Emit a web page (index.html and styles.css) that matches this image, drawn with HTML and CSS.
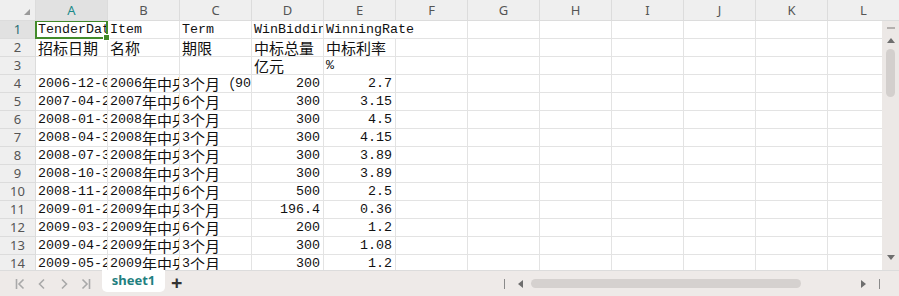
FILE: index.html
```html
<!DOCTYPE html>
<html lang="zh-CN">
<head>
    <meta charset="UTF-8">
    <title>sheet1</title>
    <link rel="stylesheet" href="styles.css">
</head>
<body>
<div class="sheet">
    <!-- column headers -->
    <div class="col-head">
        <div class="corner"><span class="corner-mark"></span></div>
        <div class="ch active">A</div>
        <div class="ch">B</div>
        <div class="ch">C</div>
        <div class="ch">D</div>
        <div class="ch">E</div>
        <div class="ch">F</div>
        <div class="ch">G</div>
        <div class="ch">H</div>
        <div class="ch">I</div>
        <div class="ch">J</div>
        <div class="ch">K</div>
        <div class="ch">L</div>
    </div>

    <div class="body">
        <div class="grid">
            <div class="rh active">1</div>
            <div class="c sel"><span class="clip">TenderDate</span><span class="handle"></span></div>
            <div class="c">Item</div>
            <div class="c">Term</div>
            <div class="c">WinBiddingAmount</div>
            <div class="c wide">WinningRate</div>
            <div class="c"></div><div class="c"></div><div class="c"></div><div class="c"></div><div class="c"></div><div class="c"></div>

            <div class="rh">2</div>
            <div class="c"><span class="zh">招标日期</span></div>
            <div class="c"><span class="zh">名称</span></div>
            <div class="c"><span class="zh">期限</span></div>
            <div class="c"><span class="zh">中标总量</span></div>
            <div class="c"><span class="zh">中标利率</span></div>
            <div class="c"></div><div class="c"></div><div class="c"></div><div class="c"></div><div class="c"></div><div class="c"></div><div class="c"></div>

            <div class="rh">3</div>
            <div class="c"></div>
            <div class="c"></div>
            <div class="c"></div>
            <div class="c"><span class="zh">亿元</span></div>
            <div class="c">%</div>
            <div class="c"></div><div class="c"></div><div class="c"></div><div class="c"></div><div class="c"></div><div class="c"></div><div class="c"></div>

            <div class="rh">4</div>
            <div class="c">2006-12-07</div>
            <div class="c">2006<span class="zh">年中央国库现金管理</span></div>
            <div class="c">3<span class="zh">个月（</span>90<span class="zh">天）</span></div>
            <div class="c num">200</div>
            <div class="c num">2.7</div>
            <div class="c"></div><div class="c"></div><div class="c"></div><div class="c"></div><div class="c"></div><div class="c"></div><div class="c"></div>

            <div class="rh">5</div>
            <div class="c">2007-04-25</div>
            <div class="c">2007<span class="zh">年中央国库现金管理</span></div>
            <div class="c">6<span class="zh">个月</span></div>
            <div class="c num">300</div>
            <div class="c num">3.15</div>
            <div class="c"></div><div class="c"></div><div class="c"></div><div class="c"></div><div class="c"></div><div class="c"></div><div class="c"></div>

            <div class="rh">6</div>
            <div class="c">2008-01-30</div>
            <div class="c">2008<span class="zh">年中央国库现金管理</span></div>
            <div class="c">3<span class="zh">个月</span></div>
            <div class="c num">300</div>
            <div class="c num">4.5</div>
            <div class="c"></div><div class="c"></div><div class="c"></div><div class="c"></div><div class="c"></div><div class="c"></div><div class="c"></div>

            <div class="rh">7</div>
            <div class="c">2008-04-30</div>
            <div class="c">2008<span class="zh">年中央国库现金管理</span></div>
            <div class="c">3<span class="zh">个月</span></div>
            <div class="c num">300</div>
            <div class="c num">4.15</div>
            <div class="c"></div><div class="c"></div><div class="c"></div><div class="c"></div><div class="c"></div><div class="c"></div><div class="c"></div>

            <div class="rh">8</div>
            <div class="c">2008-07-30</div>
            <div class="c">2008<span class="zh">年中央国库现金管理</span></div>
            <div class="c">3<span class="zh">个月</span></div>
            <div class="c num">300</div>
            <div class="c num">3.89</div>
            <div class="c"></div><div class="c"></div><div class="c"></div><div class="c"></div><div class="c"></div><div class="c"></div><div class="c"></div>

            <div class="rh">9</div>
            <div class="c">2008-10-30</div>
            <div class="c">2008<span class="zh">年中央国库现金管理</span></div>
            <div class="c">3<span class="zh">个月</span></div>
            <div class="c num">300</div>
            <div class="c num">3.89</div>
            <div class="c"></div><div class="c"></div><div class="c"></div><div class="c"></div><div class="c"></div><div class="c"></div><div class="c"></div>

            <div class="rh">10</div>
            <div class="c">2008-11-27</div>
            <div class="c">2008<span class="zh">年中央国库现金管理</span></div>
            <div class="c">6<span class="zh">个月</span></div>
            <div class="c num">500</div>
            <div class="c num">2.5</div>
            <div class="c"></div><div class="c"></div><div class="c"></div><div class="c"></div><div class="c"></div><div class="c"></div><div class="c"></div>

            <div class="rh">11</div>
            <div class="c">2009-01-22</div>
            <div class="c">2009<span class="zh">年中央国库现金管理</span></div>
            <div class="c">3<span class="zh">个月</span></div>
            <div class="c num">196.4</div>
            <div class="c num">0.36</div>
            <div class="c"></div><div class="c"></div><div class="c"></div><div class="c"></div><div class="c"></div><div class="c"></div><div class="c"></div>

            <div class="rh">12</div>
            <div class="c">2009-03-26</div>
            <div class="c">2009<span class="zh">年中央国库现金管理</span></div>
            <div class="c">6<span class="zh">个月</span></div>
            <div class="c num">200</div>
            <div class="c num">1.2</div>
            <div class="c"></div><div class="c"></div><div class="c"></div><div class="c"></div><div class="c"></div><div class="c"></div><div class="c"></div>

            <div class="rh">13</div>
            <div class="c">2009-04-23</div>
            <div class="c">2009<span class="zh">年中央国库现金管理</span></div>
            <div class="c">3<span class="zh">个月</span></div>
            <div class="c num">300</div>
            <div class="c num">1.08</div>
            <div class="c"></div><div class="c"></div><div class="c"></div><div class="c"></div><div class="c"></div><div class="c"></div><div class="c"></div>

            <div class="rh">14</div>
            <div class="c">2009-05-21</div>
            <div class="c">2009<span class="zh">年中央国库现金管理</span></div>
            <div class="c">3<span class="zh">个月</span></div>
            <div class="c num">300</div>
            <div class="c num">1.2</div>
            <div class="c"></div><div class="c"></div><div class="c"></div><div class="c"></div><div class="c"></div><div class="c"></div><div class="c"></div>
        </div>

        <!-- vertical scrollbar -->
        <div class="vscroll">
            <span class="vs-dash"></span>
            <span class="tri up"></span>
            <span class="vs-thumb"></span>
            <span class="vs-space"></span>
            <span class="tri down"></span>
        </div>
    </div>

    <!-- sheet tabs + horizontal scrollbar -->
    <div class="tabbar">
        <div class="nav">
            <svg width="10" height="12" viewBox="0 0 10 12"><path d="M1.5 1v10M8.5 1.5L4 6l4.5 4.5" fill="none" stroke="#a9a9a9" stroke-width="1.6"/></svg>
            <svg width="10" height="12" viewBox="0 0 10 12"><path d="M7 1.5L2.5 6 7 10.5" fill="none" stroke="#a9a9a9" stroke-width="1.6"/></svg>
            <svg width="10" height="12" viewBox="0 0 10 12"><path d="M3 1.5L7.5 6 3 10.5" fill="none" stroke="#a9a9a9" stroke-width="1.6"/></svg>
            <svg width="10" height="12" viewBox="0 0 10 12"><path d="M1.5 1.5L6 6l-4.5 4.5M8.5 1v10" fill="none" stroke="#a9a9a9" stroke-width="1.6"/></svg>
        </div>
        <div class="tab">sheet1</div>
        <div class="add">+</div>
        <div class="hscroll">
            <span class="bar"></span>
            <span class="tri left"></span>
            <span class="hs-thumb"></span>
            <span class="hs-space"></span>
            <span class="tri right"></span>
            <span class="bar"></span>
        </div>
    </div>
</div>
</body>
</html>
```

FILE: styles.css
```css
body {
    margin: 0;
    background: #ffffff;
    font-family: "Noto Sans", Arial, sans-serif;
}
.sheet {
    width: 899px;
    height: 296px;
    overflow: hidden;
    display: flex;
    flex-direction: column;
}

/* column headers */
.col-head {
    display: grid;
    grid-template-columns: 36px repeat(12, 72px);
    height: 21px;
    background: #efefef;
    border-bottom: 1px solid #dcdcdc;
    box-sizing: border-box;
    flex: none;
}
.corner {
    border-right: 1px solid #dcdcdc;
    position: relative;
}
.corner-mark {
    position: absolute;
    right: 5px;
    bottom: 5px;
    width: 0;
    height: 0;
    border-left: 6px solid transparent;
    border-bottom: 6px solid #9a9a9a;
}
.ch {
    border-right: 1px solid #dcdcdc;
    text-align: center;
    font-size: 13px;
    line-height: 20px;
    color: #555;
}
.ch.active {
    background: #e1e1e1;
    color: #1b8a8a;
}

/* cell area */
.body {
    display: flex;
    flex: none;
    height: 249px;
}
.grid {
    width: 882px;
    overflow: hidden;
    display: grid;
    grid-template-columns: 36px repeat(12, 72px);
    grid-auto-rows: 18px;
    align-content: start;
}
.rh {
    background: #efefef;
    border-right: 1px solid #dcdcdc;
    border-bottom: 1px solid #dcdcdc;
    text-align: center;
    font-size: 13px;
    line-height: 17px;
    color: #555;
}
.rh.active {
    background: #e1e1e1;
    color: #2a6f73;
}
.c {
    border-right: 1px solid #e3e3e3;
    border-bottom: 1px solid #e3e3e3;
    font-family: "Liberation Mono", "Noto Sans CJK SC", monospace;
    font-size: 13.33px;
    line-height: 17px;
    color: #111;
    padding-left: 2px;
    white-space: nowrap;
    overflow: hidden;
    position: relative;
}
.c .zh {
    font-family: "Noto Sans CJK SC", sans-serif;
    font-size: 15px;
    line-height: 17px;
    vertical-align: top;
}
.c.num {
    text-align: right;
    padding-left: 0;
    padding-right: 3px;
}
.c.wide {
    grid-column: span 2;
}

/* active cell A1 */
.c.sel {
    overflow: visible;
    z-index: 2;
}
.c.sel .clip {
    display: block;
    overflow: hidden;
}
.c.sel::before {
    content: "";
    position: absolute;
    left: -1px;
    top: -1px;
    right: -1px;
    bottom: -1px;
    border: 2px solid #428a2a;
}
.handle {
    position: absolute;
    right: -3px;
    bottom: -3px;
    width: 5px;
    height: 5px;
    background: #428a2a;
    border: 1px solid #fff;
}

/* vertical scrollbar */
.vscroll {
    width: 17px;
    background: #ece8e6;
    display: flex;
    flex-direction: column;
    align-items: center;
    padding-top: 6px;
    box-sizing: border-box;
}
.vs-dash {
    width: 8px;
    height: 2px;
    background: #b4b0ae;
    margin-bottom: 9px;
}
.vs-thumb {
    width: 9px;
    height: 48px;
    border-radius: 5px;
    background: #d3cfcd;
    margin-top: 6px;
}
.vs-space {
    flex: 1;
}
.tri {
    width: 0;
    height: 0;
}
.tri.up {
    border-left: 4px solid transparent;
    border-right: 4px solid transparent;
    border-bottom: 5px solid #6e6e6e;
}
.tri.down {
    border-left: 4px solid transparent;
    border-right: 4px solid transparent;
    border-top: 5px solid #6e6e6e;
    margin-bottom: 10px;
}
.tri.left {
    border-top: 4px solid transparent;
    border-bottom: 4px solid transparent;
    border-right: 5px solid #6e6e6e;
}
.tri.right {
    border-top: 4px solid transparent;
    border-bottom: 4px solid transparent;
    border-left: 5px solid #6e6e6e;
}

/* tab bar */
.tabbar {
    flex: 1;
    display: flex;
    align-items: flex-start;
    background: #eeeae8;
    border-top: 1px solid #dcdcdc;
    box-sizing: border-box;
}
.nav {
    display: flex;
    gap: 12px;
    padding: 7px 0 0 15px;
    width: 87px;
    flex: none;
}
.tab {
    width: 63px;
    height: 22px;
    background: #fff;
    border-radius: 0 0 5px 5px;
    text-align: center;
    font-family: "Noto Sans", Arial, sans-serif;
    font-weight: bold;
    font-size: 13px;
    line-height: 21px;
    color: #1f8080;
    margin-top: -1px;
}
.add {
    font-size: 20px;
    font-weight: bold;
    line-height: 24px;
    color: #333;
    margin-left: 6px;
}
.hscroll {
    margin-left: auto;
    display: flex;
    align-items: center;
    height: 25px;
    width: 376px;
    padding-right: 19px;
    box-sizing: content-box;
}
.bar {
    width: 1px;
    height: 10px;
    background: #8a8a8a;
}
.hscroll .tri.left {
    margin-left: 13px;
    margin-right: 8px;
}
.hs-thumb {
    width: 270px;
    height: 9px;
    border-radius: 5px;
    background: #d5d1cf;
}
.hs-space {
    flex: 1;
}
.hscroll .tri.right {
    margin-right: 13px;
}
```
